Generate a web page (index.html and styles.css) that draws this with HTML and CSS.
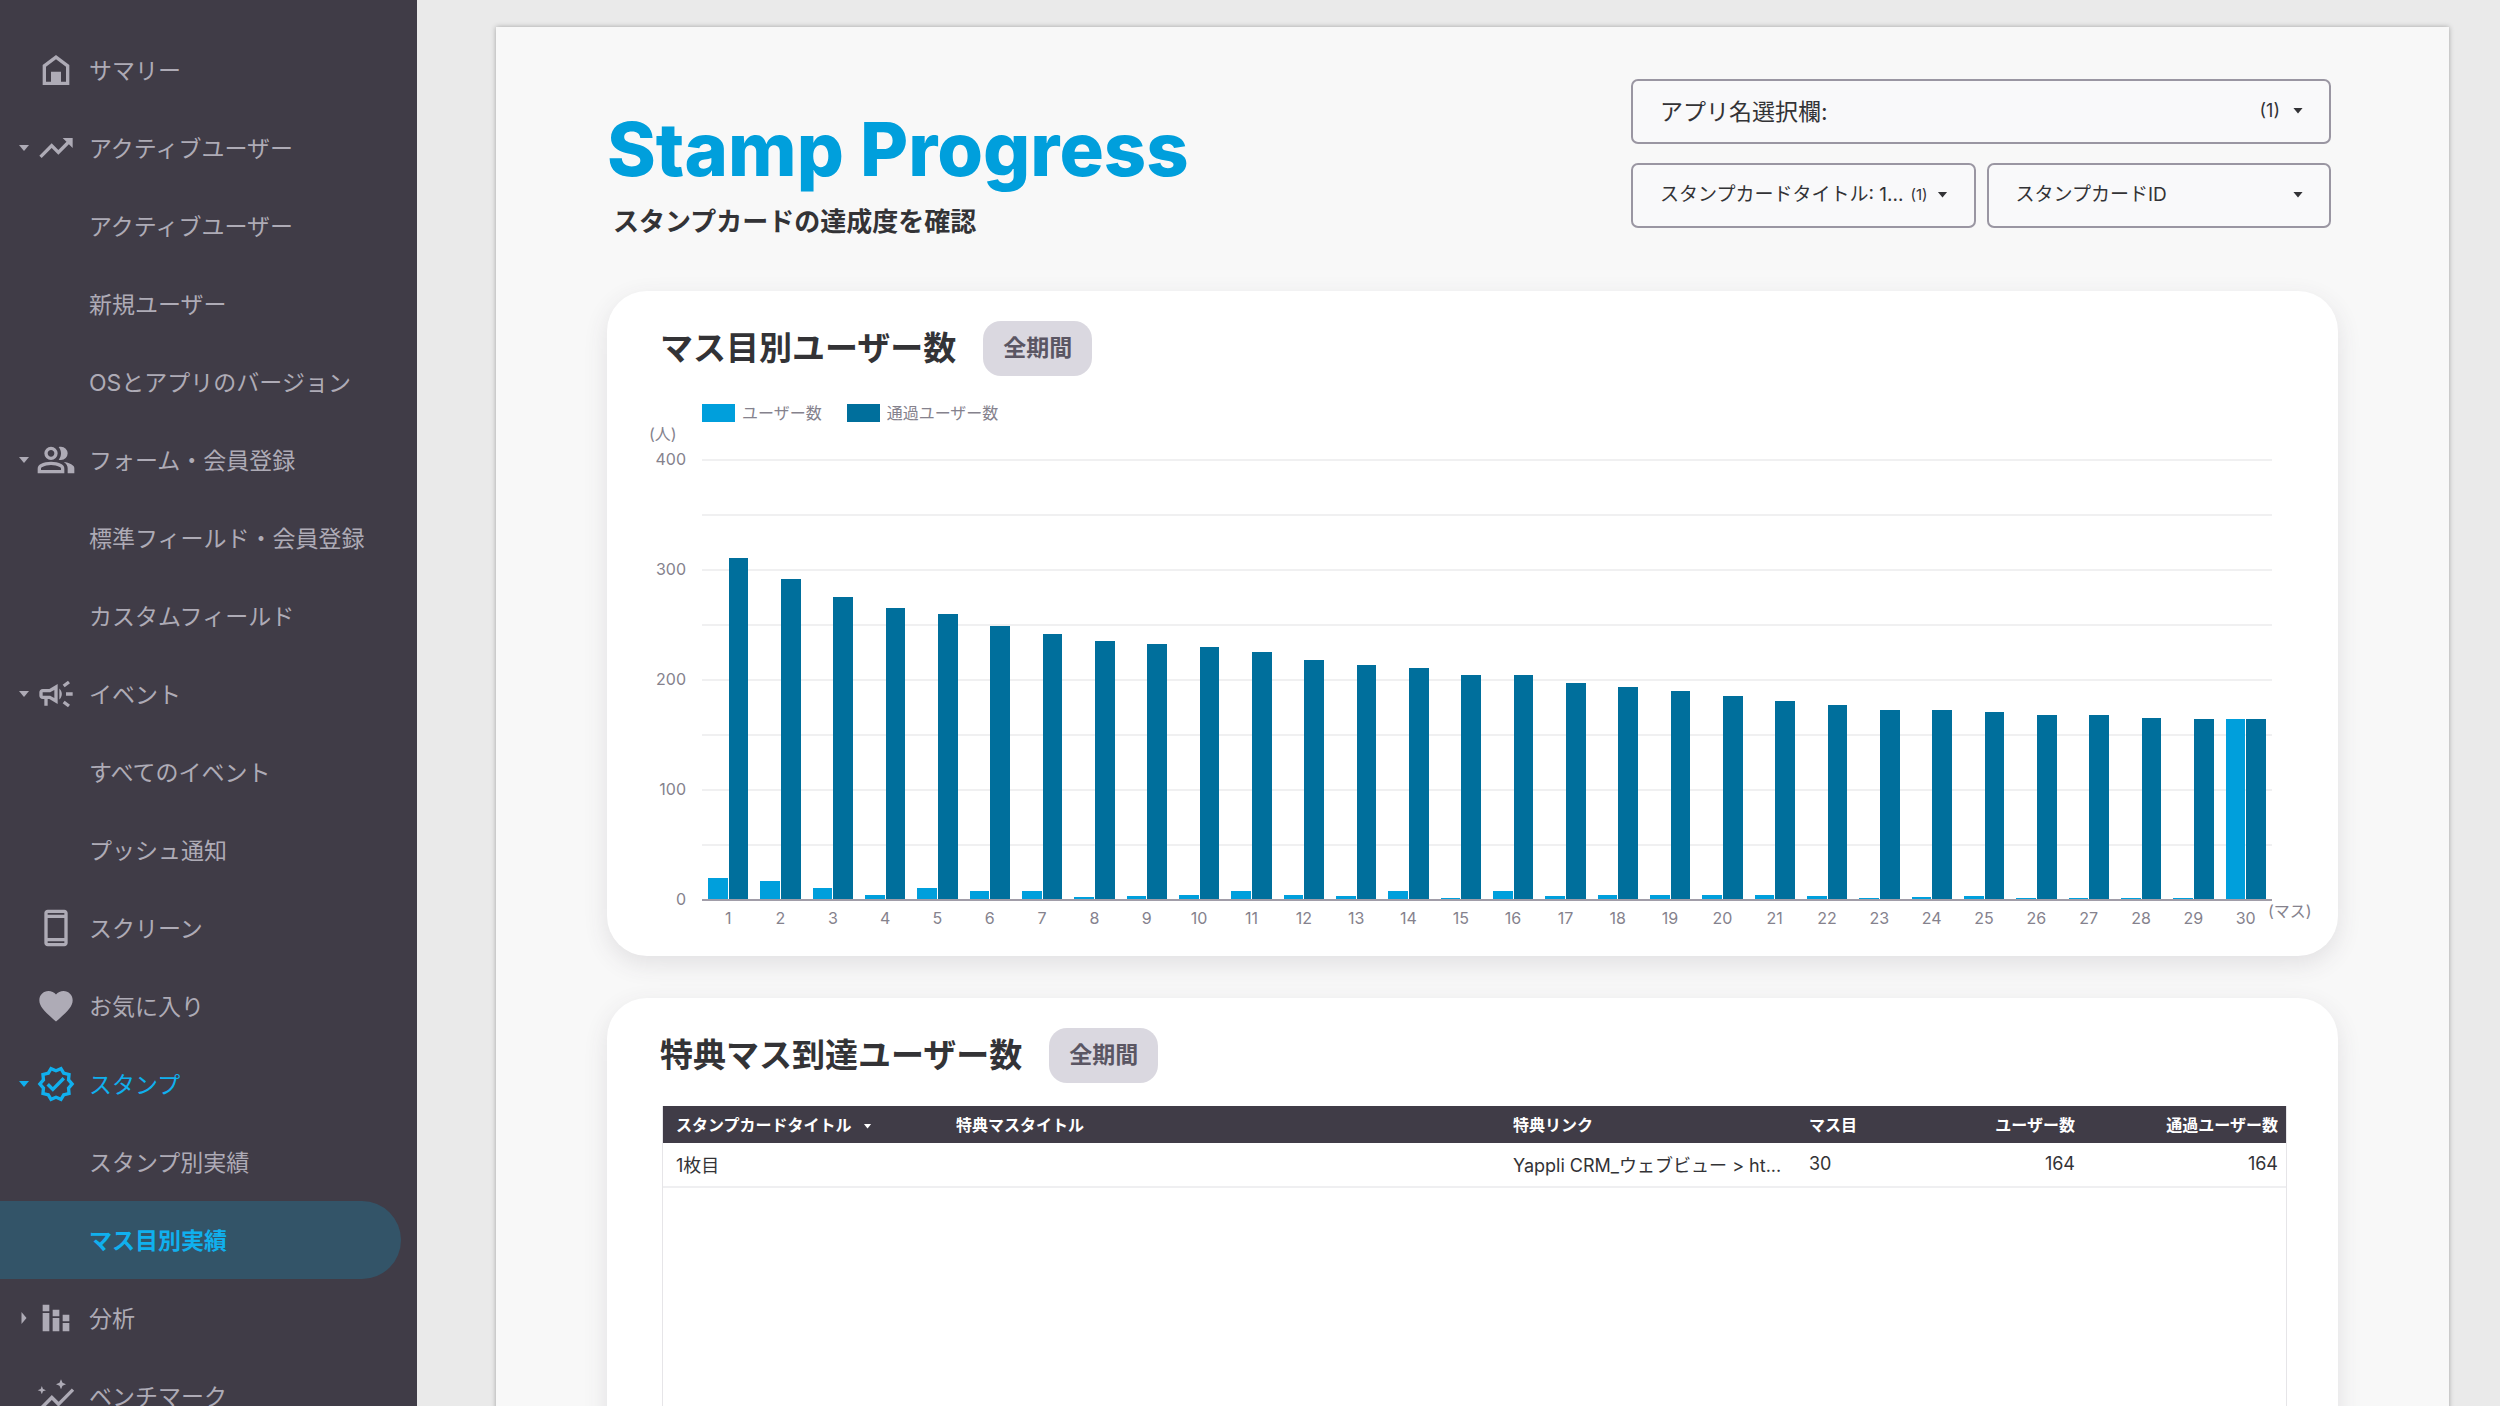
FILE: index.html
```html
<!doctype html>
<html lang="ja">
    <head>
        <meta charset="UTF-8" />
        <meta name="viewport" content="width=device-width, initial-scale=1.0" />
        <title>Stamp Progress</title>
        <link rel="stylesheet" href="styles.css">
    </head>
    <body>
        <nav class="sidebar">
            <a class="nav-item" href="#">
                <span class="arrow"></span>
                <svg class="icon" viewBox="0 0 24 24"><path fill-rule="evenodd" d="M12 3 4 9v12h16V9zM6 19v-9l6-4.5 6 4.5v9h-3v-6H9v6z"/></svg>
                サマリー
            </a>
            <a class="nav-item" href="#">
                <span class="arrow down"></span>
                <svg class="icon" viewBox="0 0 24 24"><path d="M16 6l2.29 2.29-4.88 4.88-4-4L2 16.59 3.41 18l6-6 4 4 6.3-6.29L22 12V6z"/></svg>
                アクティブユーザー
            </a>
            <a class="nav-item sub" href="#">アクティブユーザー</a>
            <a class="nav-item sub" href="#">新規ユーザー</a>
            <a class="nav-item sub" href="#">OSとアプリのバージョン</a>
            <a class="nav-item" href="#">
                <span class="arrow down"></span>
                <svg class="icon" viewBox="0 0 24 24"><path d="M1 20v-2.8q0-.85.438-1.562.437-.713 1.162-1.088 1.55-.775 3.15-1.163Q7.35 13 9 13t3.25.387q1.6.388 3.15 1.163.725.375 1.162 1.088Q17 16.35 17 17.2V20Zm18 0v-3q0-1.1-.612-2.113-.613-1.012-1.738-1.737 1.275.15 2.4.512 1.125.363 2.1.888.9.5 1.375 1.112Q23 16.275 23 17v3ZM9 12q-1.65 0-2.825-1.175Q5 9.65 5 8q0-1.65 1.175-2.825Q7.35 4 9 4q1.65 0 2.825 1.175Q13 6.35 13 8q0 1.65-1.175 2.825Q10.65 12 9 12Zm10-4q0 1.65-1.175 2.825Q16.65 12 15 12q-.275 0-.7-.062-.425-.063-.7-.138.675-.8 1.037-1.775Q15 9.05 15 8q0-1.05-.363-2.025Q14.275 5 13.6 4.2q.35-.125.7-.163Q14.65 4 15 4q1.65 0 2.825 1.175Q19 6.35 19 8ZM3 18h12v-.8q0-.275-.137-.5-.138-.225-.363-.35-1.35-.675-2.725-1.013Q10.4 15 9 15t-2.775.337Q4.85 15.675 3.5 16.35q-.225.125-.362.35-.138.225-.138.5Zm6-8q.825 0 1.413-.588Q11 8.825 11 8t-.587-1.412Q9.825 6 9 6q-.825 0-1.412.588Q7 7.175 7 8t.588 1.412Q8.175 10 9 10Z"/></svg>
                フォーム・会員登録
            </a>
            <a class="nav-item sub" href="#">標準フィールド・会員登録</a>
            <a class="nav-item sub" href="#">カスタムフィールド</a>
            <a class="nav-item" href="#">
                <span class="arrow down"></span>
                <svg class="icon" viewBox="0 0 24 24"><path d="M18 11v2h4v-2zM16 17.61c.96.71 2.21 1.65 3.2 2.39.4-.53.8-1.07 1.2-1.6-.99-.74-2.24-1.68-3.2-2.4-.4.54-.8 1.08-1.2 1.61zM20.4 5.6c-.4-.53-.8-1.07-1.2-1.6-.99.74-2.24 1.68-3.2 2.4.4.53.8 1.07 1.2 1.6.96-.72 2.21-1.65 3.2-2.4zM4 9c-1.1 0-2 .9-2 2v2c0 1.1.9 2 2 2h1v4h2v-4h1l5 3V6L8 9zm5.03 1.71L11 9.53v4.94l-1.97-1.18-.48-.29H4v-2h4.55zM15.5 12c0-1.33-.58-2.53-1.5-3.35v6.69c.92-.81 1.5-2.01 1.5-3.34z"/></svg>
                イベント
            </a>
            <a class="nav-item sub" href="#">すべてのイベント</a>
            <a class="nav-item sub" href="#">プッシュ通知</a>
            <a class="nav-item" href="#">
                <span class="arrow"></span>
                <svg class="icon" viewBox="0 0 24 24"><path d="M17 1H7c-1.1 0-2 .9-2 2v18c0 1.1.9 2 2 2h10c1.1 0 2-.9 2-2V3c0-1.1-.9-2-2-2zm0 20H7v-1h10zm0-3H7V6h10zm0-14H7V3h10z"/></svg>
                スクリーン
            </a>
            <a class="nav-item" href="#">
                <span class="arrow"></span>
                <svg class="icon" viewBox="0 0 24 24"><path d="M12 21.35l-1.45-1.32C5.4 15.36 2 12.28 2 8.5 2 5.42 4.42 3 7.5 3c1.74 0 3.41.81 4.5 2.09C13.09 3.81 14.76 3 16.5 3 19.58 3 22 5.42 22 8.5c0 3.78-3.4 6.86-8.55 11.54z"/></svg>
                お気に入り
            </a>
            <a class="nav-item open" href="#">
                <span class="arrow down"></span>
                <svg class="icon" viewBox="0 0 24 24"><path d="M23 11.99l-2.44-2.79.34-3.69-3.61-.82L15.4 1.5 12 2.96 8.6 1.5 6.71 4.69 3.1 5.5l.34 3.7L1 11.99l2.44 2.79-.34 3.7 3.61.82 1.89 3.2 3.4-1.47 3.4 1.46 1.89-3.19 3.61-.82-.34-3.69zm-3.95 1.48l-.56.65.08.85.18 1.95-1.9.43-.84.19-.44.74-.99 1.68-1.78-.77-.8-.34-.79.34-1.78.77-.99-1.67-.44-.74-.84-.19-1.9-.43.18-1.96.08-.85-.56-.65L3.67 12l1.29-1.48.56-.65-.09-.86-.18-1.94 1.9-.43.84-.19.44-.74.99-1.68 1.78.77.8.34.79-.34 1.78-.77.99 1.68.44.74.84.19 1.9.43-.18 1.95-.08.85.56.65 1.29 1.47zM10.09 13.75l-2.32-2.33-1.48 1.49 3.8 3.81 7.34-7.36-1.48-1.49z"/></svg>
                スタンプ
            </a>
            <a class="nav-item sub" href="#">スタンプ別実績</a>
            <a class="nav-item sub active" href="#" aria-current="page">マス目別実績</a>
            <a class="nav-item" href="#">
                <span class="arrow right"></span>
                <svg class="icon" viewBox="0 0 24 24"><path d="M4 9h4v11H4zM4 4h4v4H4zM10 7h4v4h-4zM10 12h4v8h-4zM16 10h4v4h-4zM16 15h4v5h-4z"/></svg>
                分析
            </a>
            <a class="nav-item" href="#">
                <span class="arrow"></span>
                <svg class="icon" viewBox="0 0 24 24"><path d="M15 8l.9-2.1L18 5l-2.1-.9L15 2l-.9 2.1L12 5l2.1.9zM3.5 11l.7-1.8L6 8.5l-1.8-.7L3.5 6l-.7 1.8L1 8.5l1.8.7zM3.4 20.5l6.1-6.1 4 4 9.4-9.5-1.4-1.4-7.9 8-4.1-4.1L2 19z"/></svg>
                ベンチマーク
            </a>
        </nav>
        <main class="canvas">
            <div class="sheet">
                <header class="header">
                    <div class="heading">
                        <h1>Stamp Progress</h1>
                        <p>スタンプカードの達成度を確認</p>
                    </div>
                    <div class="filters">
                        <label class="filter wide">
                            <select aria-label="アプリ名選択欄"><option>アプリ名選択欄:</option></select>
                            <span class="picked">(1)<span class="arrow down"></span></span>
                        </label>
                        <label class="filter">
                            <select aria-label="スタンプカードタイトル"><option>スタンプカードタイトル: 1...</option></select>
                            <span class="picked">(1)<span class="arrow down"></span></span>
                        </label>
                        <label class="filter">
                            <select aria-label="スタンプカードID"><option>スタンプカードID</option></select>
                            <span class="picked"><span class="arrow down"></span></span>
                        </label>
                    </div>
                </header>

                <section class="card">
                    <div class="card-head">
                        <h2>マス目別ユーザー数</h2>
                        <span class="period">全期間</span>
                    </div>
                    <div class="legend">
                        <span class="key users">ユーザー数</span>
                        <span class="key passed">通過ユーザー数</span>
                    </div>
                    <div class="chart">
                        <div class="unit">(人)</div>
                        <div class="y-axis">
                            <span>400</span>
                            <span>300</span>
                            <span>200</span>
                            <span>100</span>
                            <span>0</span>
                        </div>
                        <div class="plot" id="plot"></div>
                        <div class="x-axis" id="xAxis"></div>
                    </div>
                </section>

                <section class="card">
                    <div class="card-head">
                        <h2>特典マス到達ユーザー数</h2>
                        <span class="period">全期間</span>
                    </div>
                    <div class="table-box">
                        <table>
                            <colgroup>
                                <col class="c-card" />
                                <col />
                                <col class="c-link" />
                                <col class="c-cell" />
                                <col class="c-users" />
                                <col class="c-passed" />
                            </colgroup>
                            <thead>
                                <tr>
                                    <th>スタンプカードタイトル<span class="arrow down"></span></th>
                                    <th>特典マスタイトル</th>
                                    <th>特典リンク</th>
                                    <th>マス目</th>
                                    <th class="num">ユーザー数</th>
                                    <th class="num">通過ユーザー数</th>
                                </tr>
                            </thead>
                            <tbody>
                                <tr>
                                    <td>1枚目</td>
                                    <td></td>
                                    <td>Yappli CRM_ウェブビュー &gt; ht...</td>
                                    <td>30</td>
                                    <td class="num">164</td>
                                    <td class="num">164</td>
                                </tr>
                            </tbody>
                        </table>
                    </div>
                </section>
            </div>
        </main>
        <script>
            const MAX = 400;
            const users = [19, 16, 10, 4, 10, 7, 7, 2, 3, 4, 7, 4, 3, 7, 1, 7, 3, 4, 4, 4, 4, 3, 1, 2, 3, 1, 1, 1, 1, 164];
            const passed = [310, 291, 275, 265, 259, 248, 241, 235, 232, 229, 225, 217, 213, 210, 204, 204, 196, 193, 189, 185, 180, 176, 172, 172, 170, 167, 167, 165, 164, 164];

            const plot = document.getElementById("plot");
            const xAxis = document.getElementById("xAxis");
            passed.forEach((value, i) => {
                plot.innerHTML += `<div class="group">
                    <div class="bar users" style="height: ${(users[i] / MAX) * 100}%"></div>
                    <div class="bar passed" style="height: ${(value / MAX) * 100}%"></div>
                </div>`;
                xAxis.innerHTML += `<span>${i + 1}</span>`;
            });
            xAxis.innerHTML += `<span class="x-unit">(マス)</span>`;
        </script>
    </body>
</html>
```

FILE: styles.css
```css
:root {
    --dark: #403c47;
    --muted: #aeabb6;
    --accent: #009fdc;
    --accent-dark: #006f9c;
    --text: #333336;
    --axis: #85828d;
}
* {
    box-sizing: border-box;
}
body {
    margin: 0;
    display: flex;
    height: 100vh;
    overflow: hidden;
    background: #eaeaea;
    color: var(--text);
    font-family: Inter, "Noto Sans CJK JP", sans-serif;
}
h1, h2, p {
    margin: 0;
}

/* sidebar */
.sidebar {
    flex: none;
    width: 417px;
    padding-top: 31px;
    background: var(--dark);
    overflow: hidden;
}
.nav-item {
    display: flex;
    align-items: center;
    height: 78px;
    margin-right: 16px;
    padding: 0 0 3px 19px;
    color: var(--muted);
    font-size: 23px;
    text-decoration: none;
}
.nav-item.sub {
    padding-left: 89px;
}
.nav-item.open {
    color: #10b0ee;
}
.nav-item.active {
    background: #335468;
    border-radius: 0 39px 39px 0;
    color: #10b0ee;
    font-weight: 700;
}
.icon {
    width: 40px;
    height: 40px;
    margin: 3px 13px 0 7px;
    fill: currentColor;
}
.arrow {
    display: inline-block;
    width: 10px;
    height: 6px;
}
.nav-item .arrow {
    margin-top: 3px;
}
.arrow.down {
    background: currentColor;
    clip-path: polygon(0 0, 100% 0, 50% 100%);
}
.arrow.right {
    height: 12px;
    background: currentColor;
    clip-path: polygon(25% 0, 75% 50%, 25% 100%);
}

/* report sheet */
.canvas {
    flex: 1;
    padding: 27px 51px 0 79px;
    overflow: hidden;
}
.sheet {
    min-height: 100%;
    padding: 0 111px;
    background: #f8f8f8;
    box-shadow: 0 0 5px rgba(0, 0, 0, 0.3);
}
.header {
    display: flex;
    justify-content: space-between;
    margin-bottom: 54px;
}
.heading {
    padding-top: 82px;
}
h1 {
    color: var(--accent);
    font-size: 74px;
    font-weight: 800;
    line-height: 80px;
}
.heading p {
    margin: 18px 0 0 6px;
    font-size: 26px;
    font-weight: 700;
    line-height: 30px;
}
.filters {
    display: grid;
    grid-template-columns: 1fr 1fr;
    gap: 19px 11px;
    width: 700px;
    margin: 52px 7px 0 0;
    align-content: start;
}
.filter {
    position: relative;
    height: 65px;
    font-size: 19px;
}
.filter.wide {
    grid-column: span 2;
    font-size: 23px;
}
.filter select {
    appearance: none;
    width: 100%;
    height: 100%;
    padding: 0 28px 2px 27px;
    background: #f9f9fa;
    border: 2px solid #9a96a2;
    border-radius: 7px;
    color: var(--text);
    font: inherit;
}
.filter.wide select {
    padding-bottom: 0;
}
.picked {
    position: absolute;
    top: 0;
    right: 28px;
    display: flex;
    align-items: center;
    gap: 10px;
    height: 100%;
    padding-bottom: 2px;
    font-size: 15px;
    pointer-events: none;
}
.wide .picked {
    gap: 13px;
    font-size: 18px;
}

/* cards */
.card {
    margin-bottom: 42px;
    padding: 30px 0 28px;
    background: white;
    border-radius: 40px;
    box-shadow: 0 8px 24px rgba(64, 60, 71, 0.12);
}
.card-head {
    display: flex;
    align-items: center;
    gap: 27px;
    padding-left: 53px;
}
h2 {
    font-size: 33px;
    font-weight: 700;
    line-height: 55px;
}
.period {
    padding: 0 20px;
    background: #dad8e0;
    border-radius: 18px;
    color: #5a5663;
    font-size: 23px;
    font-weight: 700;
    line-height: 55px;
}

/* chart */
.legend {
    display: flex;
    gap: 25px;
    margin: 27px 0 0 95px;
    color: var(--axis);
    font-size: 16px;
    line-height: 20px;
}
.key {
    display: flex;
    align-items: center;
    gap: 7px;
}
.key::before {
    content: "";
    width: 33px;
    height: 18px;
}
.key.users::before, .bar.users {
    background: var(--accent);
}
.key.passed::before, .bar.passed {
    background: var(--accent-dark);
}
.chart {
    display: grid;
    grid-template-columns: 53px 1fr;
    padding: 1px 66px 0 42px;
    color: var(--axis);
    font-size: 16px;
    line-height: 20px;
}
.unit {
    grid-column: span 2;
    margin-bottom: 5px;
}
.y-axis {
    grid-row: span 2;
    display: flex;
    flex-direction: column;
    justify-content: space-between;
    height: 460px;
    padding-right: 16px;
    text-align: right;
}
.plot {
    display: flex;
    height: 442px;
    margin-top: 10px;
    background: repeating-linear-gradient(to bottom, #f0f0f1 0 2px, transparent 2px 55px);
    border-bottom: 2px solid #a19da8;
}
.group {
    flex: 1;
    display: flex;
    align-items: flex-end;
    gap: 1px;
    padding: 0 6px;
}
.bar {
    flex: 1;
}
.x-axis {
    position: relative;
    grid-column: 2;
    display: flex;
    margin-top: 7px;
    text-align: center;
}
.x-axis span {
    flex: 1;
}
.x-axis .x-unit {
    position: absolute;
    top: -7px;
    left: 100%;
    margin-left: -4px;
    white-space: nowrap;
}

/* table */
.table-box {
    height: 600px;
    margin: 23px 51px 0 55px;
    border: 1px solid #e6e5e8;
    border-top: none;
}
table {
    width: 100%;
    table-layout: fixed;
    border-collapse: collapse;
}
.c-card {
    width: 280px;
}
.c-link {
    width: 296px;
}
.c-cell {
    width: 154px;
}
.c-users {
    width: 133px;
}
.c-passed {
    width: 203px;
}
th, td {
    padding: 0 8px 2px 13px;
    text-align: left;
    white-space: nowrap;
}
th {
    height: 37px;
    background: var(--dark);
    color: white;
    font-size: 16px;
    font-weight: 700;
}
th .arrow {
    width: 8px;
    height: 5px;
    margin: 0 0 2px 12px;
}
td {
    height: 44px;
    border-bottom: 2px solid #efeff1;
    font-size: 18px;
}
th.num, td.num {
    padding-left: 0;
    text-align: right;
}
```
